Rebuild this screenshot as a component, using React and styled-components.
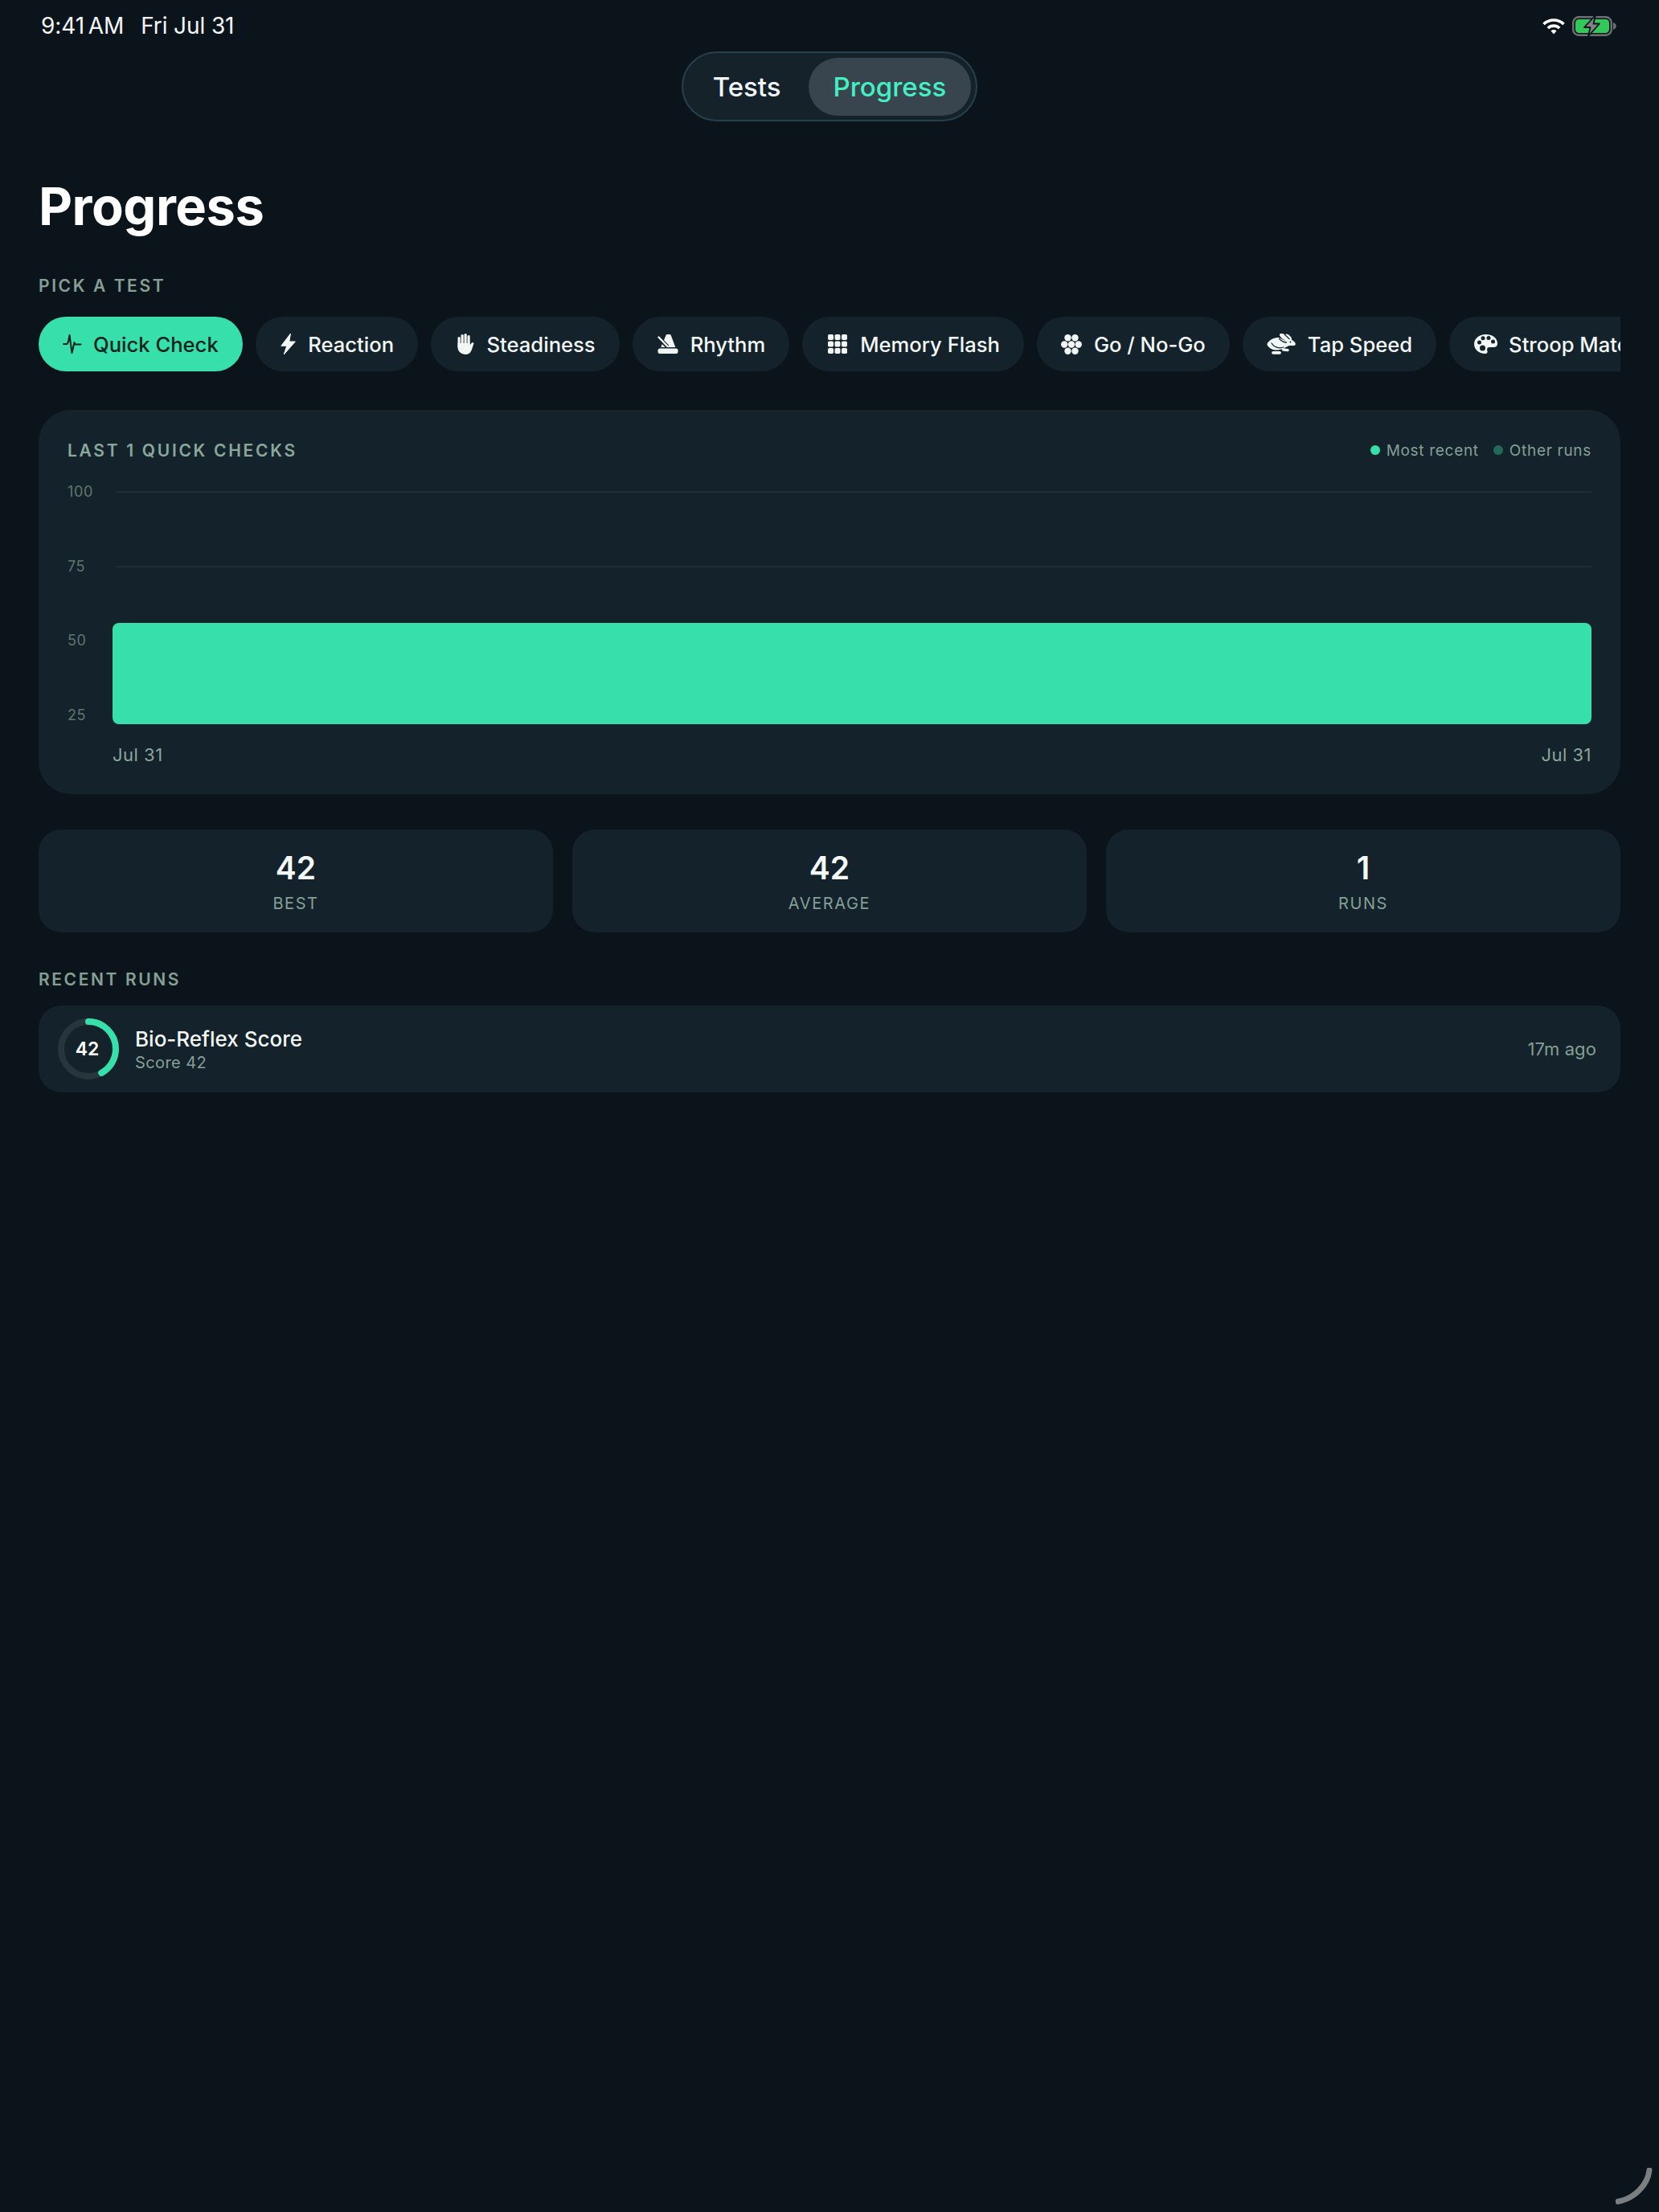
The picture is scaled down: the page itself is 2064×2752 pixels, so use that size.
import React from 'react';
import styled, { createGlobalStyle } from 'styled-components';

const GlobalStyle = createGlobalStyle`
  html, body {
    margin: 0;
    padding: 0;
    background: #0c141b;
  }
  body {
    font-family: Inter, "Liberation Sans", sans-serif;
    color: #f2f7f5;
  }
  * { box-sizing: border-box; }
`;

const Page = styled.div`
  position: relative;
  width: 2064px;
  height: 2752px;
  overflow: hidden;
  background: #0c141b;
`;

const StatusBar = styled.div`
  display: flex;
  justify-content: space-between;
  align-items: center;
  height: 64px;
  padding: 0 52px 0 51px;
  font-size: 28px;
  color: #f4f6f8;
`;

const StatusLeft = styled.div`
  display: flex;
  gap: 21px;
  letter-spacing: -0.1px;
`;

const Clock = styled.span`
  word-spacing: -3px;
`;

const StatusRight = styled.div`
  display: flex;
  align-items: center;
  gap: 8px;
`;

const NavWrap = styled.div`
  display: flex;
  justify-content: center;
`;

const Segmented = styled.div`
  display: flex;
  align-items: center;
  gap: 3px;
  height: 87px;
  padding: 0 6px;
  background: #16222a;
  border: 2px solid #26404f;
  border-radius: 44px;
`;

const Segment = styled.div`
  display: flex;
  align-items: center;
  justify-content: center;
  height: 72px;
  padding: 0 31px;
  border-radius: 36px;
  font-size: 33px;
  font-weight: 500;
  background: ${p => (p.$active ? '#38454e' : 'transparent')};
  color: ${p => (p.$active ? '#45efc4' : '#f0f5fa')};
`;

const Content = styled.div`
  padding: 0 48px;
`;

const Title = styled.h1`
  margin: 66px 0 0;
  font-size: 65px;
  line-height: 80px;
  font-weight: 700;
  letter-spacing: -0.5px;
  color: #fff;
`;

const SectionLabel = styled.div`
  margin-top: ${p => p.$top}px;
  font-size: 21px;
  line-height: 26px;
  font-weight: 600;
  letter-spacing: 2.6px;
  color: #84a094;
`;

const ChipRow = styled.div`
  display: flex;
  gap: 16px;
  margin-top: 25px;
  overflow: hidden;
`;

const Chip = styled.div`
  flex-shrink: 0;
  display: flex;
  align-items: center;
  gap: 14px;
  height: 68px;
  padding: 0 30px;
  border-radius: 34px;
  font-size: 25.6px;
  font-weight: 500;
  background: ${p => (p.$active ? '#37dfab' : '#14222b')};
  color: ${p => (p.$active ? '#08231c' : '#f2f7f5')};
`;

const ChipIcon = styled.span`
  display: flex;
  justify-content: center;
  flex-shrink: 0;
  width: ${p => p.$w}px;
`;

const ChartCard = styled.div`
  margin-top: 48px;
  height: 478px;
  padding: 36px 36px 0;
  background: #14222b;
  border-radius: 40px;
`;

const ChartHeader = styled.div`
  display: flex;
  justify-content: space-between;
  align-items: center;
  height: 28px;
`;

const ChartTitle = styled.div`
  font-size: 21px;
  font-weight: 600;
  letter-spacing: 2.7px;
  color: #8aa79b;
`;

const Legend = styled.div`
  display: flex;
  gap: 18px;
  font-size: 19px;
  letter-spacing: 0.7px;
  color: #84a094;
`;

const LegendItem = styled.div`
  display: flex;
  align-items: center;
  gap: 8px;
`;

const Dot = styled.span`
  width: 12px;
  height: 12px;
  border-radius: 50%;
  background: ${p => p.$color};
`;

const Plot = styled.div`
  display: flex;
  margin-top: 28px;
  height: 299px;
`;

const Axis = styled.div`
  display: flex;
  flex-direction: column;
  gap: 72.67px;
  width: 56px;
  flex-shrink: 0;
`;

const AxisLabel = styled.div`
  height: 20px;
  font-size: 18px;
  line-height: 20px;
  letter-spacing: 0.6px;
  color: #5f766c;
`;

const PlotArea = styled.div`
  flex: 1;
  display: grid;
`;

const GridLines = styled.div`
  grid-area: 1 / 1;
  display: flex;
  flex-direction: column;
  gap: 90.67px;
  padding: 9px 0 0 4px;
`;

const GridLine = styled.div`
  height: 2px;
  background: #1f2e36;
`;

const Bar = styled.div`
  grid-area: 1 / 1;
  align-self: end;
  height: 126px;
  background: #37dfab;
  border-radius: 8px;
`;

const DateRow = styled.div`
  display: flex;
  justify-content: space-between;
  margin: 24px 0 0 56px;
  font-size: 22px;
  line-height: 28px;
  letter-spacing: 0.5px;
  color: #8aa79b;
`;

const StatGrid = styled.div`
  display: grid;
  grid-template-columns: repeat(3, 1fr);
  gap: 24px;
  margin-top: 44px;
`;

const StatCard = styled.div`
  display: flex;
  flex-direction: column;
  align-items: center;
  height: 128px;
  padding-top: 24px;
  background: #14222b;
  border-radius: 28px;
`;

const StatValue = styled.div`
  font-size: 39px;
  line-height: 48px;
  font-weight: 600;
  color: #f4f8f7;
`;

const StatLabel = styled.div`
  margin-top: 8px;
  font-size: 20px;
  line-height: 24px;
  letter-spacing: 1.6px;
  color: #84a094;
`;

const RunRow = styled.div`
  display: flex;
  align-items: center;
  height: 108px;
  margin-top: 19px;
  padding: 0 30px 0 24px;
  background: #14222b;
  border-radius: 28px;
`;

const Ring = styled.div`
  position: relative;
  display: flex;
  align-items: center;
  justify-content: center;
  width: 76px;
  height: 76px;
  padding-right: 3px;
  flex-shrink: 0;
  font-size: 23px;
  font-weight: 600;
  color: #fff;
`;

const RingSvg = styled.svg`
  position: absolute;
  inset: 0;
`;

const RunText = styled.div`
  flex: 1;
  margin-left: 20px;
`;

const RunTitle = styled.div`
  margin-top: 1px;
  font-size: 26px;
  line-height: 32px;
  font-weight: 500;
  color: #f2f7f5;
`;

const RunSub = styled.div`
  font-size: 20px;
  line-height: 26px;
  letter-spacing: 0.4px;
  color: #84a094;
`;

const RunTime = styled.div`
  font-size: 22px;
  letter-spacing: 0.1px;
  color: #84a094;
`;

const CornerHandle = styled.svg`
  position: absolute;
  right: 8px;
  bottom: 9px;
`;

const Wifi = () => (
  <svg width="30" height="21" viewBox="0 0 30 21" fill="none" stroke="#fff">
    <path d="M2.500 8a18 18 0 0 1 25 0" strokeWidth="3.600" />
    <path d="M7.800 13a10.500 10.500 0 0 1 14.400 0" strokeWidth="3.600" />
    <path d="M11.500 16.500a5.500 5.500 0 0 1 7 0L15 20.500z" fill="#fff" stroke="none" />
  </svg>
);

const Battery = () => (
  <svg width="56" height="26" viewBox="0 0 56 26">
    <rect x="1.200" y="2.200" width="47.600" height="22.600" rx="7" fill="none" stroke="#6b7074" strokeWidth="2.400" />
    <rect x="4" y="5" width="42" height="17" rx="4.500" fill="#34c85a" />
    <path d="M51 9v9c2.200-.6 3.800-2.400 3.800-4.500S53.200 9.600 51 9z" fill="#6b7074" />
    <path d="M29 0L15 15h7.500L20 26l14-15.500h-7.500z" fill="#7d8387" stroke="#0c141b" strokeWidth="1.800" strokeLinejoin="round" />
  </svg>
);

const PulseIcon = () => (
  <svg width="24" height="26" viewBox="0 0 24 26" fill="none" stroke="currentColor" strokeWidth="2" strokeLinecap="round" strokeLinejoin="round">
    <path d="M1 13h4.500l1.500-3 1.500-8 3 22 3-13 1 2.500h7" />
  </svg>
);

const BoltIcon = () => (
  <svg width="19" height="28" viewBox="0 0 19 27" fill="currentColor" stroke="currentColor" strokeWidth="1" strokeLinejoin="round">
    <path d="M12.500.5L.8 15.800h7L4.200 26.500 18.300 10.500h-7.500z" />
  </svg>
);

const HandIcon = () => (
  <svg width="22" height="26" viewBox="0 0 22 26" fill="currentColor">
    <rect x="1.500" y="4" width="3.200" height="14" rx="1.600" />
    <rect x="5.500" y="1" width="3.200" height="14" rx="1.600" />
    <rect x="9.500" y="0" width="3.200" height="14" rx="1.600" />
    <rect x="13.500" y="2" width="3.200" height="14" rx="1.600" />
    <path d="M1.500 12h15.200v2.500l2.200-3c1-1.300 3-.3 2.400 1.300l-2.300 7c-1.200 3.800-3.800 6.200-7.500 6.200-5.500 0-10-3.500-10-9z" />
  </svg>
);

const MetronomeIcon = () => (
  <svg width="26" height="24" viewBox="0 0 26 24" fill="currentColor">
    <path d="M10.500 1.200c.3-.8 1-1.200 1.700-1.200h2.800c.8 0 1.500.4 1.800 1.200L22.300 16H4.200z" />
    <path d="M1 3.500L12.500 15.500" stroke="#14222b" strokeWidth="5" />
    <path d="M1.500 3.500L12.500 15" stroke="currentColor" strokeWidth="2.400" strokeLinecap="round" />
    <rect x="0.500" y="17.500" width="25" height="6.500" rx="2.500" />
  </svg>
);

const GridIcon = () => (
  <svg width="24" height="24" viewBox="0 0 24 24" fill="currentColor">
    {[0, 8.500, 17].map(y =>
      [0, 8.500, 17].map(x => <rect key={`${x}-${y}`} x={x} y={y} width="7" height="7" rx="1.800" />)
    )}
  </svg>
);

const HexIcon = () => (
  <svg width="26" height="25" viewBox="0 0 26 25" fill="currentColor">
    <circle cx="8.500" cy="4.200" r="4.200" />
    <circle cx="17.500" cy="4.200" r="4.200" />
    <circle cx="4.200" cy="12.500" r="4.200" />
    <circle cx="13" cy="12.500" r="4.200" />
    <circle cx="21.800" cy="12.500" r="4.200" />
    <circle cx="8.500" cy="20.800" r="4.200" />
    <circle cx="17.500" cy="20.800" r="4.200" />
  </svg>
);

const HareIcon = () => (
  <svg width="36" height="26" viewBox="0 0 36 26" fill="currentColor">
    <ellipse cx="22" cy="4.500" rx="7" ry="3" transform="rotate(35 22 4.500)" />
    <ellipse cx="27" cy="4.500" rx="5" ry="2.400" transform="rotate(45 27 4.500)" />
    <path d="M1 15c-1-1.500-.5-3 .8-4.300C5 7 10 4.800 15 5l8 4 2 7c-3 3-10 5-15 4.500C6 20 2.500 17.500 1 15z" />
    <path d="M23 8c3-2 6-1.500 8.500 0 2.500 1.500 4 3 4.300 4.800.2 1.200-.8 2.200-2 2.200h-5c-1.500 0-2.500.5-3.500 1.500L21 14z" />
    <path d="M15.500 6.500c3 3 6 4.500 9 4.500" fill="none" stroke="#14222b" strokeWidth="1.300" strokeLinecap="round" />
    <path d="M22 1l6.500 6" fill="none" stroke="#14222b" strokeWidth="1.100" />
    <path d="M6 12c3 5 9 7 15 5" fill="none" stroke="#14222b" strokeWidth="1.300" strokeLinecap="round" />
    <circle cx="29.500" cy="10.500" r="1" fill="#14222b" />
    <path d="M20.500 20l5.500.6" fill="none" stroke="currentColor" strokeWidth="3.400" strokeLinecap="round" />
    <path d="M8 23.800h8" fill="none" stroke="currentColor" strokeWidth="3.800" strokeLinecap="round" />
  </svg>
);

const PaletteIcon = () => (
  <svg width="29" height="24" viewBox="0 0 29 24">
    <path d="M14.500 0C6.300 0 0 5.200 0 12s6 12 13.500 12c2.800 0 3.500-1.800 2.800-3.800-.8-2.200.2-4.200 3-4.200h4.500c3 0 5.200-1.500 5.200-4.800C29 4.600 22.500 0 14.500 0z" fill="currentColor" />
    <circle cx="6.500" cy="10" r="2.500" fill="#14222b" />
    <circle cx="11" cy="4.800" r="2.500" fill="#14222b" />
    <circle cx="18" cy="4.500" r="2.500" fill="#14222b" />
    <circle cx="23.500" cy="9" r="2.500" fill="#14222b" />
    <circle cx="10.500" cy="17" r="3.500" fill="#14222b" />
  </svg>
);

const tests = [
  { name: 'Quick Check', icon: <PulseIcon />, w: 24 , active: true },
  { name: 'Reaction', icon: <BoltIcon />, w: 21.5 },
  { name: 'Steadiness', icon: <HandIcon />, w: 25.5 },
  { name: 'Rhythm', icon: <MetronomeIcon />, w: 28 },
  { name: 'Memory Flash', icon: <GridIcon />, w: 28 },
  { name: 'Go / No-Go', icon: <HexIcon />, w: 27 },
  { name: 'Tap Speed', icon: <HareIcon />, w: 37 },
  { name: 'Stroop Match', icon: <PaletteIcon />, w: 30 },
];

const stats = [
  { value: '42', label: 'BEST' },
  { value: '42', label: 'AVERAGE' },
  { value: '1', label: 'RUNS' },
];

const ticks = ['100', '75', '50', '25'];

const score = 42;
const ringRadius = 34;
const ringLength = 2 * Math.PI * ringRadius;

export default function App() {
  return (
    <Page>
      <GlobalStyle />
      <StatusBar>
        <StatusLeft>
          <Clock>9:41 AM</Clock>
          <span>Fri Jul 31</span>
        </StatusLeft>
        <StatusRight>
          <Wifi />
          <Battery />
        </StatusRight>
      </StatusBar>

      <NavWrap>
        <Segmented>
          <Segment>Tests</Segment>
          <Segment $active>Progress</Segment>
        </Segmented>
      </NavWrap>

      <Content>
        <Title>Progress</Title>

        <SectionLabel $top={46}>PICK A TEST</SectionLabel>
        <ChipRow>
          {tests.map(t => (
            <Chip key={t.name} $active={t.active}>
              <ChipIcon $w={t.w}>{t.icon}</ChipIcon>
              {t.name}
            </Chip>
          ))}
        </ChipRow>

        <ChartCard>
          <ChartHeader>
            <ChartTitle>LAST 1 QUICK CHECKS</ChartTitle>
            <Legend>
              <LegendItem>
                <Dot $color="#37dfab" />
                Most recent
              </LegendItem>
              <LegendItem>
                <Dot $color="#23685a" />
                Other runs
              </LegendItem>
            </Legend>
          </ChartHeader>
          <Plot>
            <Axis>
              {ticks.map(t => <AxisLabel key={t}>{t}</AxisLabel>)}
            </Axis>
            <PlotArea>
              <GridLines>
                {ticks.map(t => <GridLine key={t} />)}
              </GridLines>
              <Bar />
            </PlotArea>
          </Plot>
          <DateRow>
            <span>Jul 31</span>
            <span>Jul 31</span>
          </DateRow>
        </ChartCard>

        <StatGrid>
          {stats.map(s => (
            <StatCard key={s.label}>
              <StatValue>{s.value}</StatValue>
              <StatLabel>{s.label}</StatLabel>
            </StatCard>
          ))}
        </StatGrid>

        <SectionLabel $top={46}>RECENT RUNS</SectionLabel>
        <RunRow>
          <Ring>
            <RingSvg width="76" height="76" viewBox="0 0 76 76" fill="none" strokeWidth="8">
              <circle cx="38" cy="38" r={ringRadius} stroke="#27353d" />
              <circle
                cx="38"
                cy="38"
                r={ringRadius}
                stroke="#37dfab"
                strokeLinecap="round"
                strokeDasharray={`${ringLength * score / 100} ${ringLength}`}
                transform="rotate(-90 38 38)"
              />
            </RingSvg>
            {score}
          </Ring>
          <RunText>
            <RunTitle>Bio-Reflex Score</RunTitle>
            <RunSub>Score 42</RunSub>
          </RunText>
          <RunTime>17m ago</RunTime>
        </RunRow>
      </Content>

      <CornerHandle width="46" height="46" viewBox="0 0 46 46" fill="none">
        <path d="M42 3C40 21 24 38 3 42" stroke="#7c7f82" strokeWidth="7" strokeLinecap="round" />
      </CornerHandle>
    </Page>
  );
}
